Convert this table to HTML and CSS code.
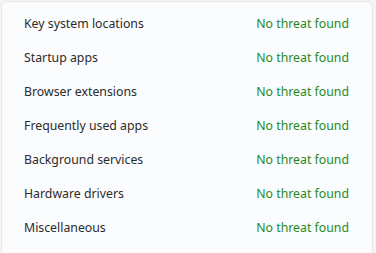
FILE: index.html
```html
<!DOCTYPE html>
<html lang="en">
<head>
  <meta charset="UTF-8">
  <title>Scan results</title>
  <link rel="stylesheet" href="styles.css">
</head>
<body>
  <div class="card">
    <div class="row"><span class="label">Key system locations</span><span class="status">No threat found</span></div>
    <div class="row"><span class="label">Startup apps</span><span class="status">No threat found</span></div>
    <div class="row"><span class="label">Browser extensions</span><span class="status">No threat found</span></div>
    <div class="row"><span class="label">Frequently used apps</span><span class="status">No threat found</span></div>
    <div class="row"><span class="label">Background services</span><span class="status">No threat found</span></div>
    <div class="row"><span class="label">Hardware drivers</span><span class="status">No threat found</span></div>
    <div class="row"><span class="label">Miscellaneous</span><span class="status">No threat found</span></div>
  </div>
</body>
</html>
```
FILE: styles.css
```css
body {
  margin: 0;
  padding: 1px 3px 0 1px;
  background-color: #f4f4f4;
  font-family: 'Noto Sans', sans-serif;
}

.card {
  background-color: #fbfcfe;
  border: 1px solid #e8e8e8;
  border-bottom: none;
  border-radius: 6px 6px 0 0;
  padding: 4px 23px 12px 22px;
}

.row {
  display: flex;
  justify-content: space-between;
  align-items: center;
  height: 34px;
  font-size: 12.3px;
}

.label {
  color: #2b2b2b;
}

.status {
  color: #1f8a1f;
}
```
